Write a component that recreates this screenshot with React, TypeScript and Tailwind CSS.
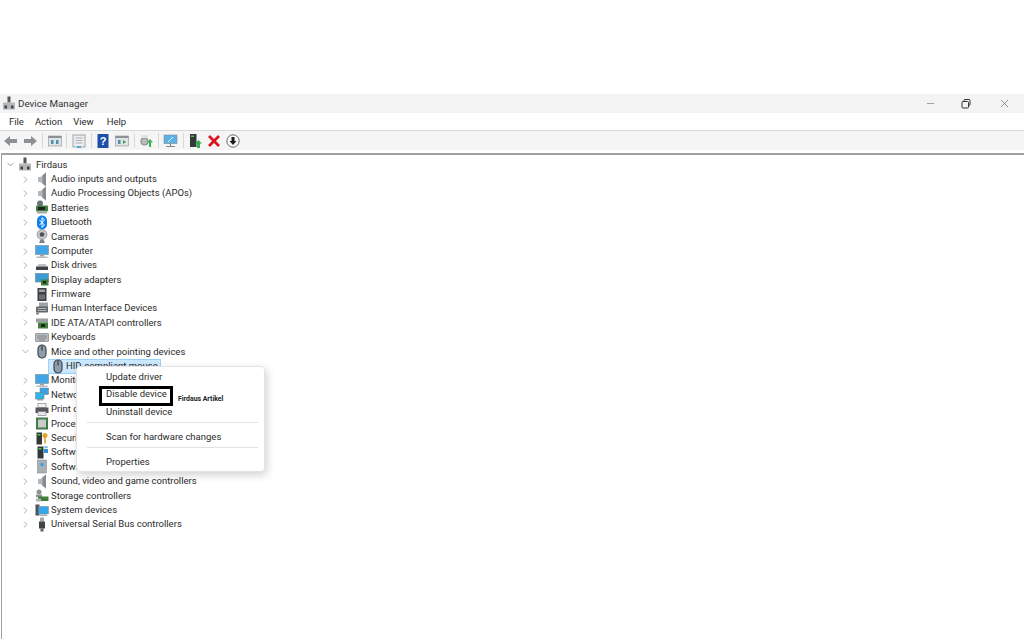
import { ChevronDown, ChevronRight, Minus, X } from "lucide-react";

type IconName =
  | "root" | "speaker" | "battery" | "bluetooth" | "camera" | "monitor" | "disk" | "display"
  | "chip" | "hid" | "ide" | "keyboard" | "mouse" | "network" | "printer" | "cpu" | "security"
  | "softcomp" | "softdev" | "storage" | "system" | "usb";

function TreeIcon({ name }: { name: IconName }) {
  return (
    <svg width="14" height="15" viewBox="0 0 14 15" className="shrink-0">
      {name === "root" && (
        <>
          <rect x="5.500" y="0.500" width="3" height="6" fill="#555" />
          <rect x="1" y="6.500" width="12" height="7" fill="#b5b8bb" />
          <rect x="2.500" y="9.500" width="2.500" height="3" fill="#444" />
          <rect x="9" y="9.500" width="2.500" height="3" fill="#444" />
        </>
      )}
      {name === "speaker" && (
        <>
          <path d="M3 5h2.500L11 0.500v14L5.500 10H3z" fill="#b4b8bb" />
          <path d="M7.500 3.500L11 0.500v14l-3.500-3z" fill="#868c90" />
        </>
      )}
      {name === "battery" && (
        <>
          <circle cx="5" cy="3.500" r="3" fill="#6d7478" />
          <rect x="1" y="5.500" width="12" height="6" rx="1" fill="#3f7f3a" />
          <rect x="3" y="7" width="7" height="3" fill="#222" />
          <rect x="2" y="11.500" width="10" height="2" fill="#a5a9ac" />
        </>
      )}
      {name === "bluetooth" && (
        <>
          <rect x="2" y="0.500" width="10" height="14" rx="5" fill="#0a7ff0" />
          <path d="M4.500 5l5 5-2.500 2.500v-10L9.500 5l-5 5" fill="none" stroke="#fff" strokeWidth="1" />
        </>
      )}
      {name === "camera" && (
        <>
          <circle cx="7" cy="5.500" r="5" fill="#c4c7c9" stroke="#777" strokeWidth="0.600" />
          <circle cx="7" cy="5.500" r="2.300" fill="#4a5053" />
          <path d="M4 14h6l-1.500-3.500h-3z" fill="#7c8285" />
        </>
      )}
      {name === "monitor" && (
        <>
          <rect x="0.500" y="1.500" width="13" height="9" fill="#41a5e8" stroke="#7d8b94" strokeWidth="0.600" />
          <rect x="5" y="10.500" width="4" height="2" fill="#9ca3a8" />
          <rect x="1.500" y="12.500" width="11" height="1.500" fill="#b5b9bc" />
        </>
      )}
      {name === "disk" && (
        <>
          <path d="M2 8.500L3.500 6h7L12 8.500z" fill="#bfc3c5" />
          <rect x="1" y="8.500" width="12" height="3.500" fill="#3d4245" />
        </>
      )}
      {name === "display" && (
        <>
          <rect x="0.500" y="1.500" width="13" height="8.500" fill="#3d9bd8" stroke="#6f7f88" strokeWidth="0.600" />
          <rect x="6" y="7.500" width="7.500" height="6" fill="#3f7f3a" />
          <rect x="8" y="9" width="3" height="2.500" fill="#222" />
        </>
      )}
      {name === "chip" && (
        <>
          <rect x="2.500" y="1" width="9" height="13" fill="#3d4144" />
          <rect x="4" y="2.500" width="6" height="2.500" fill="#9fa4a7" />
          <rect x="4" y="7.500" width="6" height="5" fill="#6a7073" />
        </>
      )}
      {name === "hid" && (
        <>
          <rect x="4" y="1.500" width="9" height="7" fill="#9ea3a6" />
          <rect x="1" y="5.500" width="12" height="6" rx="1" fill="#5f6569" />
          <path d="M2.500 7.500h9M2.500 9.500h9" stroke="#c9cccd" strokeWidth="0.800" />
          <rect x="1" y="11.500" width="3" height="2" fill="#85898c" />
        </>
      )}
      {name === "ide" && (
        <>
          <rect x="1" y="2.500" width="12" height="4" fill="#9aa0a3" />
          <rect x="3" y="6.500" width="10" height="6" fill="#3f7f3a" />
          <rect x="6" y="8" width="4" height="3" fill="#222" />
        </>
      )}
      {name === "keyboard" && (
        <>
          <rect x="0.500" y="3.500" width="13" height="8" rx="0.500" fill="#b9bdc0" stroke="#6f7478" strokeWidth="0.600" />
          <path d="M2 6h10M2 8h10M4 10h6" stroke="#6f7478" strokeWidth="0.800" />
        </>
      )}
      {name === "mouse" && (
        <>
          <rect x="3" y="1" width="8" height="13" rx="4" fill="#8d9fae" stroke="#41484d" strokeWidth="1.200" />
          <path d="M7 1.500v5" stroke="#41484d" strokeWidth="1.400" />
        </>
      )}
      {name === "network" && (
        <>
          <rect x="5" y="1" width="8.500" height="6.500" fill="#3e9fe0" stroke="#6f7f88" strokeWidth="0.500" />
          <rect x="0.500" y="5.500" width="8.500" height="6.500" fill="#2fb5e8" stroke="#6f7f88" strokeWidth="0.500" />
          <rect x="2" y="12" width="6" height="1.500" fill="#9ca3a8" />
        </>
      )}
      {name === "printer" && (
        <>
          <rect x="3" y="1.500" width="8" height="4" fill="#f2f2f2" stroke="#777" strokeWidth="0.600" />
          <rect x="0.500" y="5.500" width="13" height="5.500" fill="#55595c" />
          <rect x="3" y="9.500" width="8" height="4" fill="#e8e8e8" stroke="#777" strokeWidth="0.600" />
        </>
      )}
      {name === "cpu" && (
        <>
          <rect x="1" y="1.500" width="12" height="12" fill="#3f7a4a" />
          <rect x="3" y="3.500" width="8" height="8" fill="#c9cdca" />
        </>
      )}
      {name === "security" && (
        <>
          <rect x="1.500" y="1.500" width="5.500" height="12" fill="#33383b" />
          <rect x="2.500" y="3" width="3" height="1.500" fill="#48c25a" />
          <circle cx="10" cy="4.500" r="2.500" fill="#e5a32f" />
          <rect x="9.200" y="5.500" width="1.600" height="7" fill="#e5a32f" />
        </>
      )}
      {name === "softcomp" && (
        <>
          <rect x="2.500" y="1.500" width="6" height="12" fill="#33383b" />
          <rect x="3.500" y="3" width="3" height="1.500" fill="#48c25a" />
          <path d="M9 4h4v4H9z" fill="#2f8fdc" />
          <path d="M11 1.500v2M9 2h4" stroke="#2f8fdc" strokeWidth="0.800" />
        </>
      )}
      {name === "softdev" && (
        <>
          <rect x="2.500" y="1" width="9" height="13" fill="#aab0b5" stroke="#7b8186" strokeWidth="0.500" />
          <rect x="5.500" y="4" width="3" height="3" fill="#3e9fe0" />
        </>
      )}
      {name === "storage" && (
        <>
          <circle cx="4" cy="4" r="2.500" fill="#8b9296" />
          <rect x="1" y="6.500" width="6" height="2.500" fill="#8b9296" />
          <rect x="3" y="8.500" width="10.500" height="4.500" fill="#3f7f3a" />
          <rect x="1" y="10.500" width="5" height="3" fill="#b0b4b7" />
        </>
      )}
      {name === "system" && (
        <>
          <rect x="0.500" y="1.500" width="4" height="11" fill="#4c5256" />
          <rect x="3.500" y="3.500" width="10" height="7.500" fill="#35a6e8" stroke="#7d8b94" strokeWidth="0.500" />
          <rect x="5" y="11.500" width="7" height="1.500" fill="#a5abaf" />
        </>
      )}
      {name === "usb" && (
        <>
          <rect x="5" y="0.500" width="4" height="4" fill="#a5a9ac" />
          <rect x="4" y="4.500" width="6" height="7" fill="#3f4447" />
          <rect x="5.500" y="11.500" width="3" height="3" fill="#5c6265" />
        </>
      )}
    </svg>
  );
}

const topRows: { label: string; icon: IconName }[] = [
  { label: "Audio inputs and outputs", icon: "speaker" },
  { label: "Audio Processing Objects (APOs)", icon: "speaker" },
  { label: "Batteries", icon: "battery" },
  { label: "Bluetooth", icon: "bluetooth" },
  { label: "Cameras", icon: "camera" },
  { label: "Computer", icon: "monitor" },
  { label: "Disk drives", icon: "disk" },
  { label: "Display adapters", icon: "display" },
  { label: "Firmware", icon: "chip" },
  { label: "Human Interface Devices", icon: "hid" },
  { label: "IDE ATA/ATAPI controllers", icon: "ide" },
  { label: "Keyboards", icon: "keyboard" },
];

const bottomRows: { label: string; icon: IconName }[] = [
  { label: "Monitors", icon: "monitor" },
  { label: "Network adapters", icon: "network" },
  { label: "Print queues", icon: "printer" },
  { label: "Processors", icon: "cpu" },
  { label: "Security devices", icon: "security" },
  { label: "Software components", icon: "softcomp" },
  { label: "Software devices", icon: "softdev" },
  { label: "Sound, video and game controllers", icon: "speaker" },
  { label: "Storage controllers", icon: "storage" },
  { label: "System devices", icon: "system" },
  { label: "Universal Serial Bus controllers", icon: "usb" },
];

function Row({ label, icon, open }: { label: string; icon: IconName; open?: boolean }) {
  const Chevron = open ? ChevronDown : ChevronRight;
  return (
    <div className="flex h-[14.4px] items-center pl-[17px]">
      <Chevron size={11} strokeWidth={1.2} className="w-[13px] shrink-0 text-[#6e6e6e]" />
      <div className="ml-[1px] flex w-[18px] justify-center">
        <TreeIcon name={icon} />
      </div>
      <span className="whitespace-nowrap">{label}</span>
    </div>
  );
}

function ToolSep() {
  return <div className="mx-[2.300px] h-[15px] w-px bg-[#d9d9d9]" />;
}

function ToolIcon({ children }: { children: React.ReactNode }) {
  return (
    <svg width="16" height="16" viewBox="0 0 16 16" className="mx-[1.400px] shrink-0">
      {children}
    </svg>
  );
}

export default function App() {
  return (
    <div
      className="relative h-[640px] w-[1024px] overflow-hidden bg-white text-[9.5px] text-[#2b2b2b]"
      style={{ fontFamily: 'Roboto, "Open Sans", sans-serif' }}
    >
      <div className="h-[94px]" />

      <div className="flex h-[19px] items-center bg-[#f3f3f3] pl-[2px]">
        <TreeIcon name="root" />
        <span className="ml-[2px] pt-[1px] text-[9.8px] text-[#333]">Device Manager</span>
        <div className="ml-auto mr-[1px] flex items-center text-[#444]">
          <div className="flex w-[34px] justify-center">
            <Minus size={11} strokeWidth={1} />
          </div>
          <div className="flex w-[38px] justify-center">
            <svg width="10" height="10" viewBox="0 0 10 10" fill="none" stroke="#333" strokeWidth="1">
              <rect x="1" y="2.500" width="6.500" height="6.500" rx="1" />
              <path d="M3 2.500V1.500a1 1 0 0 1 1-1h4a1 1 0 0 1 1 1v4a1 1 0 0 1-1 1h-.500" />
            </svg>
          </div>
          <div className="flex w-[38px] justify-center">
            <X size={13} strokeWidth={1} />
          </div>
        </div>
      </div>

      <div className="flex h-[18px] items-center gap-[11px] border-b border-[#d8d8d8] pl-[9px] pt-[1px] text-[9.5px]">
        <span>File</span>
        <span>Action</span>
        <span>View</span>
        <span className="ml-[2px]">Help</span>
      </div>

      <div className="flex h-[19px] items-center bg-[#f5f5f5] pl-[2px]">
        <ToolIcon>
          <path d="M1 8l6-5v3h7v4H7v3z" fill="#8b9094" />
        </ToolIcon>
        <ToolIcon>
          <path d="M15 8L9 3v3H2v4h7v3z" fill="#8b9094" />
        </ToolIcon>
        <ToolSep />
        <ToolIcon>
          <rect x="1.500" y="3" width="13" height="10" fill="#dfe3e6" stroke="#8d9296" strokeWidth="0.600" />
          <rect x="1.500" y="3" width="13" height="2" fill="#8d9296" />
          <rect x="4" y="7" width="2.500" height="4" fill="#4f8fa8" />
          <rect x="9" y="7" width="2.500" height="4" fill="#4f8fa8" />
        </ToolIcon>
        <ToolSep />
        <ToolIcon>
          <rect x="2" y="2" width="12" height="12" fill="#eceef0" stroke="#8d9296" strokeWidth="0.800" />
          <path d="M4.500 5h7M4.500 7.500h7M4.500 10h7" stroke="#9aa0a5" strokeWidth="0.800" />
          <rect x="6" y="13" width="4" height="2" fill="#55a7d8" />
        </ToolIcon>
        <ToolSep />
        <ToolIcon>
          <rect x="2.500" y="1" width="11" height="14" fill="#1e4fa8" />
          <text x="8" y="12" textAnchor="middle" fontSize="11" fontWeight="700" fill="#fff" fontFamily="Liberation Sans, sans-serif">?</text>
        </ToolIcon>
        <ToolIcon>
          <rect x="1.500" y="3" width="13" height="10" fill="#dfe3e6" stroke="#8d9296" strokeWidth="0.600" />
          <rect x="1.500" y="3" width="13" height="2" fill="#8d9296" />
          <rect x="4" y="7" width="2.500" height="4" fill="#4f8fa8" />
          <path d="M9 7l3 2-3 2z" fill="#3f9a4f" />
        </ToolIcon>
        <ToolSep />
        <ToolIcon>
          <circle cx="6.500" cy="8.500" r="3.500" fill="#b8bcbf" stroke="#8a8f92" strokeWidth="1.200" />
          <rect x="3" y="2" width="7" height="3" fill="#e1e3e5" />
          <path d="M12 6l3 3.500h-2V14h-2V9.500H9z" fill="#3cb454" />
        </ToolIcon>
        <ToolSep />
        <ToolIcon>
          <rect x="1" y="2" width="13" height="8.500" fill="#5db2e5" stroke="#7d8b94" strokeWidth="0.600" />
          <path d="M3 13.500h9M7.500 10.500v3" stroke="#7d8b94" strokeWidth="1.200" />
          <path d="M5 9l5-5" stroke="#d8eefa" strokeWidth="1" />
        </ToolIcon>
        <ToolSep />
        <ToolIcon>
          <rect x="3" y="1" width="6.500" height="13" fill="#34393b" />
          <rect x="4" y="2.500" width="3" height="1.500" fill="#48c25a" />
          <path d="M11.500 7l3.500 3.500h-2V15h-3v-4.500H8z" fill="#2fae4c" />
        </ToolIcon>
        <ToolIcon>
          <path d="M3 3l10 10M13 3L3 13" stroke="#d8141c" strokeWidth="2.800" />
        </ToolIcon>
        <ToolIcon>
          <circle cx="8" cy="8" r="6.200" fill="#fafafa" stroke="#55595c" strokeWidth="0.900" />
          <path d="M6.500 4h3v4h2L8 12 4.500 8h2z" fill="#1c1c1c" />
        </ToolIcon>
      </div>

      <div className="ml-[1px] mt-[3px] h-[486px] border-l border-t-2 border-l-[#a0a0a0] border-t-[#a0a0a0] pt-[2.500px]">
        <div className="flex h-[14.4px] items-center pl-[2px]">
          <ChevronDown size={11} strokeWidth={1.2} className="w-[13px] shrink-0 text-[#555]" />
          <div className="ml-[1px] flex w-[18px] justify-start">
            <TreeIcon name="root" />
          </div>
          <span>Firdaus</span>
        </div>
        {topRows.map((r) => (
          <Row key={r.label} label={r.label} icon={r.icon} />
        ))}
        <Row label="Mice and other pointing devices" icon="mouse" open />
        <div className="flex h-[14.4px] items-center pl-[46px]">
          <div className="flex h-[15px] w-[113px] items-center border border-[#99d1ff] bg-[#cce8ff] pl-[2px]">
            <TreeIcon name="mouse" />
            <span className="ml-[1px] whitespace-nowrap">HID-compliant mouse</span>
          </div>
        </div>
        {bottomRows.map((r) => (
          <Row key={r.label} label={r.label} icon={r.icon} />
        ))}
      </div>

      {/* context menu */}
      <div className="absolute left-[76px] top-[366px] h-[106px] w-[189px] rounded-[4px] border border-[#e4e4e4] bg-white pl-[29px] pt-[1px] shadow-[2px_3px_8px_rgba(0,0,0,0.18)]">
        <div className="flex h-[17.500px] items-center">Update driver</div>
        <div className="flex h-[17.500px] items-center">Disable device</div>
        <div className="flex h-[17.500px] items-center">Uninstall device</div>
        <div className="-ml-[19px] mr-[6px] mt-[1.500px] h-px bg-[#e2e2e2]" />
        <div className="flex h-[24px] items-center pt-[5px]">Scan for hardware changes</div>
        <div className="-ml-[19px] mr-[6px] h-px bg-[#e2e2e2]" />
        <div className="flex h-[24px] items-center pt-[5px]">Properties</div>
      </div>

      {/* annotation over the menu */}
      <div className="absolute left-[99px] top-[386px] h-[20px] w-[74px] border-[3px] border-black" />
      <span className="absolute left-[178px] top-[394px] text-[6.9px] font-bold leading-[10px] text-[#222]">
        Firdaus Artikel
      </span>
    </div>
  );
}
